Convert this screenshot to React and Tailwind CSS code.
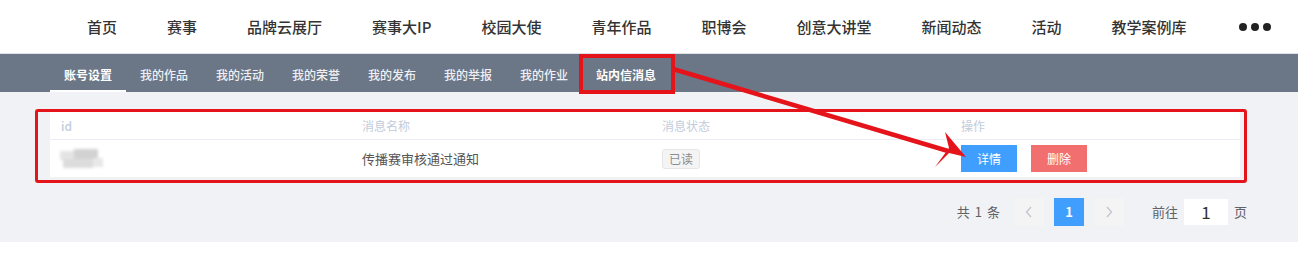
import React from "react";

const topNav = ["首页", "赛事", "品牌云展厅", "赛事大IP", "校园大使", "青年作品", "职博会", "创意大讲堂", "新闻动态", "活动", "教学案例库"];
const tabs = ["账号设置", "我的作品", "我的活动", "我的荣誉", "我的发布", "我的举报", "我的作业", "站内信消息"];

export default function App() {
  return (
    <div className="relative w-[1298px] h-[279px] overflow-hidden bg-white font-['Noto_Sans_CJK_SC','Noto_Sans',sans-serif]">
      {/* top navigation */}
      <header className="h-[54px] flex items-center pl-[87px] gap-[50px] text-[15px] leading-none text-[#333] font-medium border-b border-[#dde2ea]">
        {topNav.map((t) => (
          <span key={t} className="whitespace-nowrap">{t}</span>
        ))}
        <span className="flex items-center gap-[4px] pl-[2px]">
          <span className="w-[8px] h-[8px] rounded-full bg-[#222]" />
          <span className="w-[8px] h-[8px] rounded-full bg-[#222]" />
          <span className="w-[8px] h-[8px] rounded-full bg-[#222]" />
        </span>
      </header>

      {/* tab bar */}
      <nav className="h-[38px] bg-[#6b7686] flex pl-[50px]">
        {tabs.map((t, i) => (
          <div
            key={t}
            className={
              i === 0
                ? "h-full px-[14px] pt-[6px] flex items-center text-[12px] font-bold text-white border-b-[2px] border-white"
                : i === tabs.length - 1
                ? "h-full px-[14px] pt-[6px] flex items-center text-[12px] font-bold text-white border-b-[2px] border-transparent"
                : "h-full px-[14px] pt-[6px] flex items-center text-[12px] font-medium text-[#eef0f4] border-b-[2px] border-transparent"
            }
          >
            {t}
          </div>
        ))}
      </nav>

      {/* content */}
      <main className="h-[150px] bg-[#f0f2f5] pt-[20px] pl-[50px] pr-[58px]">
        <div className="bg-white">
          <div className="grid grid-cols-[300px_300px_300px_1fr] h-[28px] items-center text-[12px] text-[#c3cbdb] border-b border-[#ebeef5]">
            <div className="pl-[11px] font-medium">id</div>
            <div className="pl-[12px]">消息名称</div>
            <div className="pl-[12px]">消息状态</div>
            <div className="pl-[11px]">操作</div>
          </div>
          <div className="grid grid-cols-[300px_300px_300px_1fr] h-[37px] items-center text-[13px] text-[#555]">
            <div className="pl-[7px]">
              <div className="relative w-[48px] h-[22px] blur-[1.5px]">
                <div className="absolute left-[3px] top-[3px] w-[16px] h-[9px] bg-[#e4e4e4]" />
                <div className="absolute left-[17px] top-[1px] w-[24px] h-[12px] bg-[#d2d2d2]" />
                <div className="absolute left-[6px] top-[11px] w-[30px] h-[9px] bg-[#dcdcdc]" />
                <div className="absolute left-[36px] top-[10px] w-[10px] h-[9px] bg-[#e8e8e8]" />
              </div>
            </div>
            <div className="pl-[12px]">传播赛审核通过通知</div>
            <div className="pl-[12px]">
              <span className="inline-flex items-center h-[20px] px-[6px] text-[12px] text-[#8a8d93] bg-[#f4f4f5] border border-[#e6e6e8] rounded-[3px]">已读</span>
            </div>
            <div className="pl-[11px] flex gap-[14px]">
              <button className="w-[56px] h-[27px] bg-[#409eff] text-white text-[12px]">详情</button>
              <button className="w-[56px] h-[27px] bg-[#f26f6f] text-white text-[12px]">删除</button>
            </div>
          </div>
        </div>

        {/* pagination */}
        <div className="mt-[21px] -mr-[7px] flex justify-end items-center text-[13px] text-[#606266]">
          <span className="flex gap-[5px] whitespace-nowrap"><span>共</span><span>1</span><span>条</span></span>
          <span className="ml-[14px] w-[30px] h-[28px] bg-[#f4f4f5] flex items-center justify-center text-[#c0c4cc]">
            <svg width="8" height="12" viewBox="0 0 8 12" fill="none" stroke="currentColor" strokeWidth="1.3"><path d="M6 1L1.5 6L6 11" /></svg>
          </span>
          <span className="ml-[10px] w-[30px] h-[28px] bg-[#409eff] text-white font-bold flex items-center justify-center">1</span>
          <span className="ml-[10px] w-[30px] h-[28px] bg-[#f4f4f5] flex items-center justify-center text-[#c0c4cc]">
            <svg width="8" height="12" viewBox="0 0 8 12" fill="none" stroke="currentColor" strokeWidth="1.3"><path d="M2 1L6.5 6L2 11" /></svg>
          </span>
          <span className="ml-[28px] whitespace-nowrap">前往</span>
          <span className="ml-[6px] w-[44px] h-[26px] bg-white flex items-center justify-center text-[17px] text-[#333]">1</span>
          <span className="ml-[6px]">页</span>
        </div>
      </main>

      {/* annotation overlays */}
      <div className="absolute left-[579px] top-[54px] w-[96px] h-[40px] border-[4px] border-[#e5141b]" />
      <div className="absolute left-[35px] top-[109px] w-[1212px] h-[74px] border-[3px] border-[#e5141b] rounded-[3px]" />
      <svg className="absolute left-0 top-0 pointer-events-none" width="1298" height="279">
        <line x1="673" y1="69" x2="948" y2="151" stroke="#e5141b" strokeWidth="4.5" />
        <polygon points="966,157 945,132 949,148 935,167 949,153" fill="#e5141b" />
      </svg>
    </div>
  );
}
